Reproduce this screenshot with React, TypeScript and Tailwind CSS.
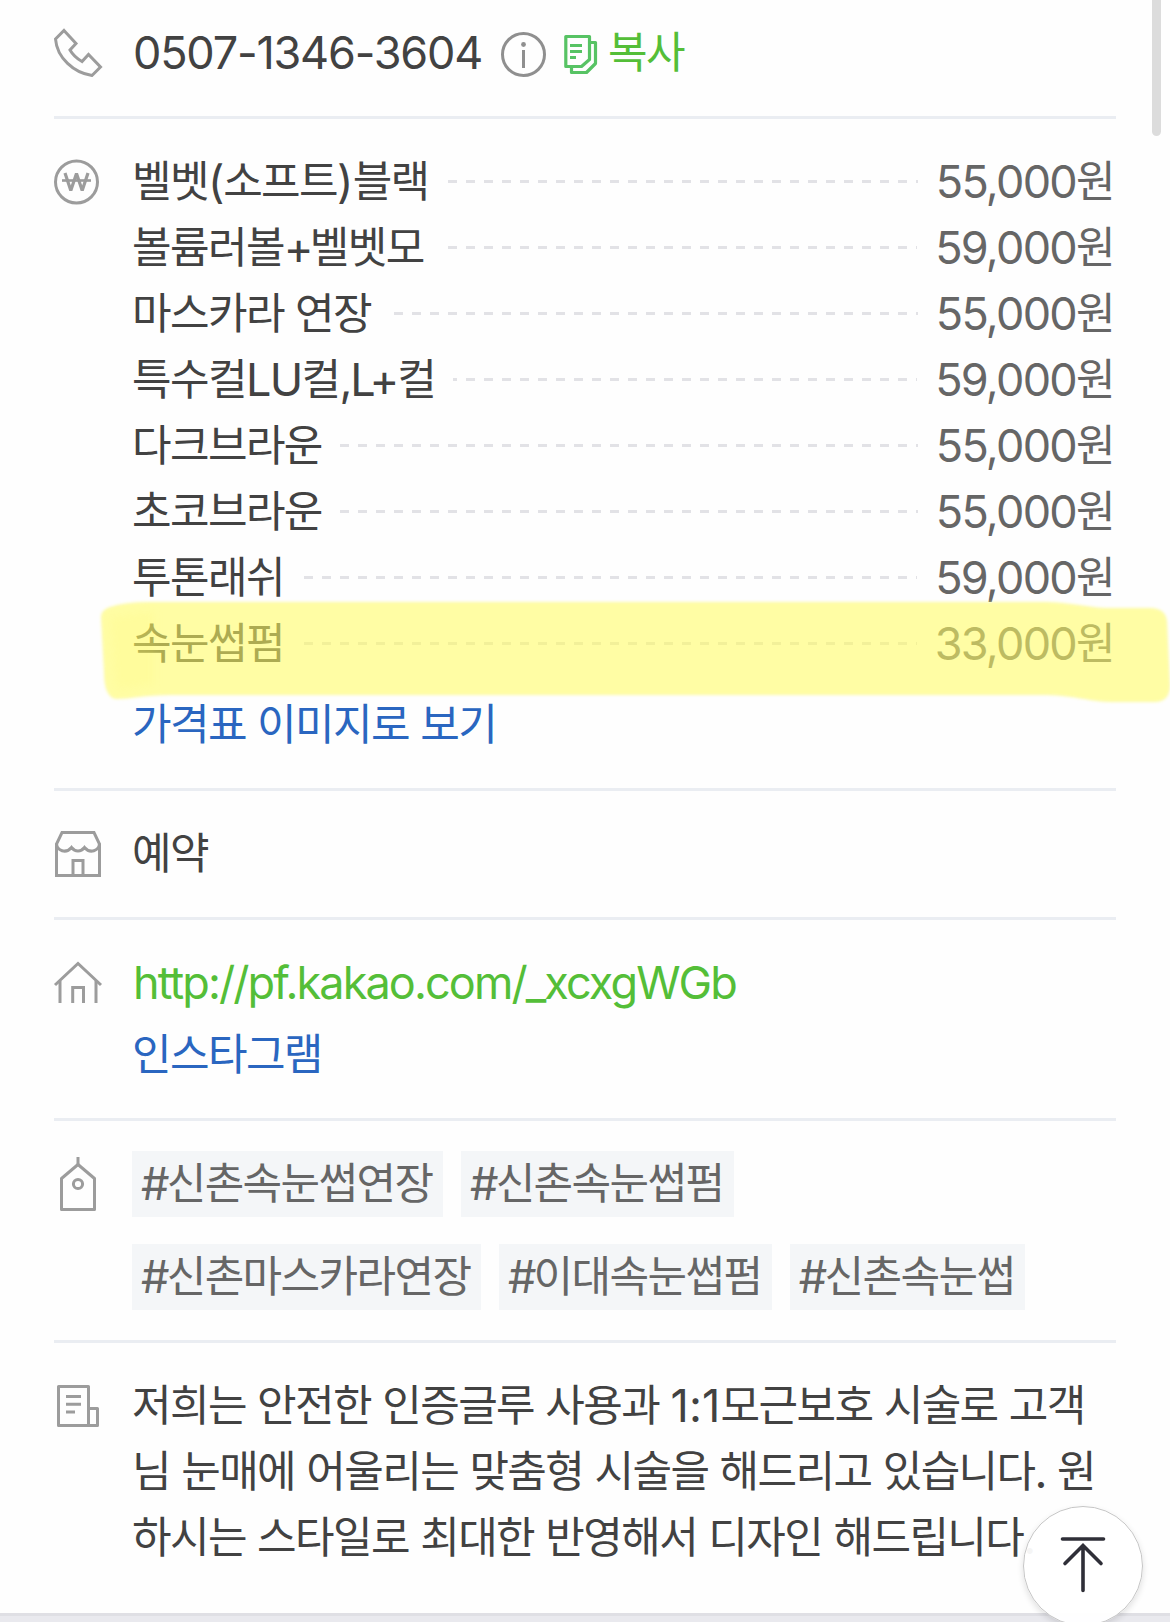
import React, { ReactNode } from "react";

const prices = [
  { name: "벨벳(소프트)블랙", price: "55,000원" },
  { name: "볼륨러볼+벨벳모", price: "59,000원" },
  { name: "마스카라 연장", price: "55,000원" },
  { name: "특수컬LU컬,L+컬", price: "59,000원" },
  { name: "다크브라운", price: "55,000원" },
  { name: "초코브라운", price: "55,000원" },
  { name: "투톤래쉬", price: "59,000원" },
  { name: "속눈썹펌", price: "33,000원" },
];

const tagRows = [
  ["#신촌속눈썹연장", "#신촌속눈썹펌"],
  ["#신촌마스카라연장", "#이대속눈썹펌", "#신촌속눈썹"],
];

const intro = [
  "저희는 안전한 인증글루 사용과 1:1모근보호 시술로 고객",
  "님 눈매에 어울리는 맞춤형 시술을 해드리고 있습니다. 원",
  "하시는 스타일로 최대한 반영해서 디자인 해드립니다.",
];

// some latin runs need their own spacing next to hangul
const tracking: Record<string, string> = {
  "1:1": "tracking-[0.2px]",
  "+": "tracking-[-3.8px]",
  ",L+": "tracking-[-2.2px]",
  "(": "tracking-[-1.2px]",
  ")": "tracking-[-0.8px]",
  "#": "tracking-[-2.8px]",
};

// latin runs are set in Inter, a bit larger than the hangul around them
const Txt = ({ children }: { children: string }) => (
  <>
    {children.split(/([!-~]+)/).map((part, i) =>
      i % 2 ? (
        <span
          key={i}
          className={`align-[-1px] font-['Inter'] text-[45px] leading-none ${tracking[part] || "tracking-[-1.7px]"}`}
        >
          {part}
        </span>
      ) : (
        part
      )
    )}
  </>
);

const Icon = ({ children }: { children: ReactNode }) => (
  <svg
    className="mr-[24px] h-[66px] w-[54px] shrink-0 overflow-visible"
    viewBox="0 0 54 66"
    fill="none"
    stroke="#9c9c9c"
    strokeWidth="3"
  >
    {children}
  </svg>
);

const Section = ({ icon, children }: { icon: ReactNode; children: ReactNode }) => (
  <section className="flex border-b-[3px] border-[#eaedf2] py-[30px]">
    <Icon>{icon}</Icon>
    <div className="min-w-0 flex-1">{children}</div>
  </section>
);

// dashes sit on one 18px grid in every row, whatever the name's width
const Leader = () => (
  <span className="mx-[18px] mt-[31px] h-[3px] flex-1 bg-[repeating-linear-gradient(to_right,#e2e2e6_0_7px,transparent_7px_16px,#e2e2e6_16px_18px)] bg-fixed" />
);

const App = () => {
  return (
    <div className="relative h-[1622px] w-[1170px] overflow-hidden bg-[#fefefe] font-['Noto_Sans_CJK_KR',sans-serif] text-[43px] leading-[58px] tracking-[-1.6px] [word-spacing:3.2px] whitespace-nowrap text-[#424242]">
      <main className="-mt-[10px] ml-[54px] w-[1062px]">
        <Section
          icon={<path d="M10 10.5 22 23.5 16 30Q20 37 28 41.5L34.5 34.5 46.5 47 38 55.5C20 53 3 38 1.5 19Z" />}
        >
          <div className="flex h-[66px] items-start">
            <span className="ml-px font-['Inter'] text-[45px] leading-[66px] tracking-[-1.2px]">0507-1346-3604</span>
            <svg className="ml-[19px] h-[66px] w-[45px]" viewBox="0 0 45 66" fill="none" stroke="#8f8f8f" strokeWidth="3">
              <circle cx="22.5" cy="34.5" r="21" />
              <path d="M22.5 30V48" />
              <circle cx="22.5" cy="24.5" r="2.4" fill="#8f8f8f" stroke="none" />
            </svg>
            <svg className="ml-[18px] h-[66px] w-[34px]" viewBox="0 0 34 66" fill="none" stroke="#57c364" strokeWidth="3.2" strokeLinejoin="round">
              <path d="M1.8 16.5H25.5V39.5L17.5 46.5H1.8Z" />
              <path d="M25.5 22.5H31.5V43.5L22.5 52.5H7.5V47" />
              <path d="M6 25.5H18M6 31.5H18M6 37.5H12" />
            </svg>
            <span className="ml-[10px] text-[#54be38]">복사</span>
          </div>
        </Section>

        <Section
          icon={
            <>
              <circle cx="22.5" cy="33" r="21" />
              <path d="M11 24 16.8 41.5 22.5 24.5 28.2 41.5 34 24" strokeWidth="3.2" strokeLinejoin="bevel" />
              <path d="M8 31.5H37" strokeWidth="2.6" />
            </>
          }
        >
          <ul>
            {prices.map((item) => (
              <li key={item.name} className="flex h-[66px]">
                <span>
                  <Txt>{item.name}</Txt>
                </span>
                <Leader />
                <span className="pr-[2px] text-[#666]">
                  <Txt>{item.price}</Txt>
                </span>
              </li>
            ))}
          </ul>
          <a className="mt-[15px] block h-[66px] text-[#2a66c0]">가격표 이미지로 보기</a>
        </Section>

        <Section
          icon={
            <>
              <path d="M8 11.5H40L45.5 23V54.5H2.5V23Z" />
              <path d="M2.5 22.5C3 30 12 33 17.5 26.5 21 31 27 31 30.5 26.5 36 33 45 30 45.5 22.5" />
              <path d="M19 54V39.5H29V54" />
            </>
          }
        >
          <p className="h-[66px]">예약</p>
        </Section>

        <Section
          icon={
            <>
              <path d="M1 35 24 13.5 47 35" />
              <path d="M6 31V53M42 31V53" />
              <path d="M18.7 53V37.5H29.5V53" />
            </>
          }
        >
          <a className="ml-px block h-[66px] font-['Inter'] text-[45px] leading-[66px] tracking-[-1.9px] text-[#54be38]">
            http://pf.kakao.com/_xcxgWGb
          </a>
          <a className="mt-[6px] block h-[66px] text-[#2a66c0]">인스타그램</a>
        </Section>

        <Section
          icon={
            <>
              <path d="M24 6V13" />
              <path d="M24 13.5 40.5 27.5V58.5H7.5V27.5Z" strokeLinejoin="round" />
              <circle cx="24" cy="33" r="4.6" />
            </>
          }
        >
          <div className="flex flex-col gap-[27px] text-[#666]">
            {tagRows.map((row, i) => (
              <div key={i} className="flex h-[66px] gap-[18px]">
                {row.map((tag) => (
                  <span key={tag} className="bg-[#f4f6f8] pr-[10.5px] pl-[9px]">
                    <Txt>{tag}</Txt>
                  </span>
                ))}
              </div>
            ))}
          </div>
        </Section>

        <section className="flex pt-[30px] pb-[42px]">
          <Icon>
            <path d="M4.5 13.5H34.5V52.5H4.5Z" strokeLinejoin="round" />
            <path d="M34.5 35.5H43.5V52.5H34.5" strokeLinejoin="round" />
            <path d="M12 23.5H27M12 31.3H27M12 39H21" />
          </Icon>
          <div>
            {intro.map((line) => (
              <p key={line} className="h-[66px]">
                <Txt>{line}</Txt>
              </p>
            ))}
          </div>
        </section>
      </main>
      <div className="h-[9px] border-t-[3px] border-[#dfdfe4] bg-[#e9e9ee]" />

      {/* marker stroke over the lash perm row */}
      <svg className="absolute top-[590px] left-[90px] h-[125px] w-[1080px]" viewBox="0 0 1080 125">
        <path
          className="blur-[1.5px]"
          d="M11 27Q11 20 20 17Q35 12 60 12H950C985 12 995 18 1020 18H1060Q1076 18 1077 32L1080 95Q1080 111 1066 112H1020C995 111 985 105 950 105H80C55 105 40 109 26 109Q14 107 14 82Z"
          fill="#fffc5f"
          fillOpacity="0.57"
        />
        <path className="blur-[5px]" d="M20 26 64 22V94L26 100Z" fill="#fff45f" fillOpacity="0.12" />
      </svg>

      <div className="absolute top-0 left-[1152px] h-[136px] w-[9px] rounded-b-full bg-[#dcdcdc]" />

      <button className="absolute top-[1506px] left-[1023px] h-[120px] w-[120px] rounded-full border-[1.5px] border-[#c6c6c6] bg-white/95 shadow-[0_3px_6px_rgba(0,0,0,0.12)]">
        <svg className="absolute -top-px -left-px h-[120px] w-[120px]" viewBox="0 0 120 120" fill="none" stroke="#2f2f38" strokeWidth="3.6" strokeLinecap="round">
          <path d="M39.5 33H80.5" />
          <path d="M60 40V84.5M42 57.5 60 39.5 78 57.5" />
        </svg>
      </button>
    </div>
  );
};

export default App;
